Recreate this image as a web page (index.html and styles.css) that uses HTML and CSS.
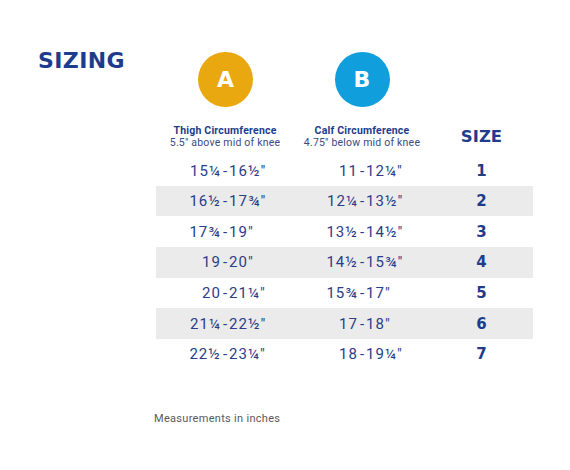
FILE: index.html
```html
<!DOCTYPE html>
<html>
<head>
  <title>Sizing</title>
  <link rel="stylesheet" href="styles.css">
</head>
<body>

<main class="sheet">
  <header class="sheet-head">
    <h1 class="title">SIZING</h1>
    <div class="badge badge-a">A</div>
    <div class="badge badge-b">B</div>
  </header>

  <div class="chart">
    <div class="chart-row chart-labels">
      <div class="label">
        <strong>Thigh Circumference</strong>
        <span>5.5" above mid of knee</span>
      </div>
      <div class="label">
        <strong>Calf Circumference</strong>
        <span>4.75" below mid of knee</span>
      </div>
      <div class="size-label">SIZE</div>
    </div>

    <div class="chart-row">
      <div class="range"><span class="lo">15¼</span><span class="dash">-</span><span class="hi">16½"</span></div>
      <div class="range"><span class="lo">11</span><span class="dash">-</span><span class="hi">12¼"</span></div>
      <div class="size">1</div>
    </div>
    <div class="chart-row">
      <div class="range"><span class="lo">16½</span><span class="dash">-</span><span class="hi">17¾"</span></div>
      <div class="range"><span class="lo">12¼</span><span class="dash">-</span><span class="hi">13½"</span></div>
      <div class="size">2</div>
    </div>
    <div class="chart-row">
      <div class="range"><span class="lo">17¾</span><span class="dash">-</span><span class="hi">19"</span></div>
      <div class="range"><span class="lo">13½</span><span class="dash">-</span><span class="hi">14½"</span></div>
      <div class="size">3</div>
    </div>
    <div class="chart-row">
      <div class="range"><span class="lo">19</span><span class="dash">-</span><span class="hi">20"</span></div>
      <div class="range"><span class="lo">14½</span><span class="dash">-</span><span class="hi">15¾"</span></div>
      <div class="size">4</div>
    </div>
    <div class="chart-row">
      <div class="range"><span class="lo">20</span><span class="dash">-</span><span class="hi">21¼"</span></div>
      <div class="range"><span class="lo">15¾</span><span class="dash">-</span><span class="hi">17"</span></div>
      <div class="size">5</div>
    </div>
    <div class="chart-row">
      <div class="range"><span class="lo">21¼</span><span class="dash">-</span><span class="hi">22½"</span></div>
      <div class="range"><span class="lo">17</span><span class="dash">-</span><span class="hi">18"</span></div>
      <div class="size">6</div>
    </div>
    <div class="chart-row">
      <div class="range"><span class="lo">22½</span><span class="dash">-</span><span class="hi">23¼"</span></div>
      <div class="range"><span class="lo">18</span><span class="dash">-</span><span class="hi">19¼"</span></div>
      <div class="size">7</div>
    </div>
  </div>

  <p class="note">Measurements in inches</p>
</main>

</body>
</html>
```

FILE: styles.css
```css
body {
  margin: 0;
  background-color: #fff;
  font-family: Roboto, "Liberation Sans", sans-serif;
}

.sheet {
  padding: 50px 0 0 38px;
}

/* Title and the two measuring points */
.sheet-head {
  display: grid;
  grid-template-columns: 118px 138px 136px;
  align-items: start;
}

.title {
  margin: 0;
  font-family: "DejaVu Sans", sans-serif;
  font-size: 22px;
  font-weight: bold;
  line-height: 1;
  letter-spacing: 0.4px;
  color: #1e3c8c;
}

.badge {
  justify-self: center;
  width: 55px;
  height: 55px;
  margin-top: 2px;
  border-radius: 50%;
  display: flex;
  justify-content: center;
  align-items: center;
  color: #fff;
  font-family: "DejaVu Sans", sans-serif;
  font-size: 22px;
  font-weight: bold;
}

.badge-a {
  background-color: #e9a80f;
  margin-left: 1px;
}

.badge-b {
  background-color: #109fdc;
}

/* Sizing chart */
.chart {
  margin-left: 118px;
  width: 377px;
}

.chart-row {
  display: grid;
  grid-template-columns: 138px 136px 103px;
  align-items: center;
  height: 30.6px;
}

/* every second size row is shaded (labels row is child 1) */
.chart-row:nth-child(2n+3) {
  background-color: #ebebeb;
}

.chart-labels {
  height: 24px;
  margin-top: 18px;
  margin-bottom: 6.3px;
}

.label {
  text-align: center;
  font-size: 10.5px;
  line-height: 12px;
  letter-spacing: 0.2px;
  color: #1e3c8c;
}

.label strong,
.label span {
  display: block;
}

.label span {
  color: #3a4a85;
}

.size-label {
  text-align: center;
  font-family: "DejaVu Sans", sans-serif;
  font-size: 16.5px;
  font-weight: bold;
  line-height: 1;
  color: #1e3c8c;
}

.range {
  display: grid;
  grid-template-columns: 1fr auto 1fr;
  font-size: 15px;
  letter-spacing: 1px;
  color: #2b3d88;
}

.range .lo {
  text-align: right;
}

.range .dash {
  padding: 0 1px 0 2px;
}

.range .hi {
  text-align: left;
}

.size {
  text-align: center;
  font-family: "DejaVu Sans", sans-serif;
  font-size: 15px;
  font-weight: bold;
  color: #1e3c8c;
}

.note {
  margin: 43px 0 0 116px;
  font-size: 11px;
  line-height: 13px;
  letter-spacing: 0.3px;
  color: #5a5a5a;
}
```
